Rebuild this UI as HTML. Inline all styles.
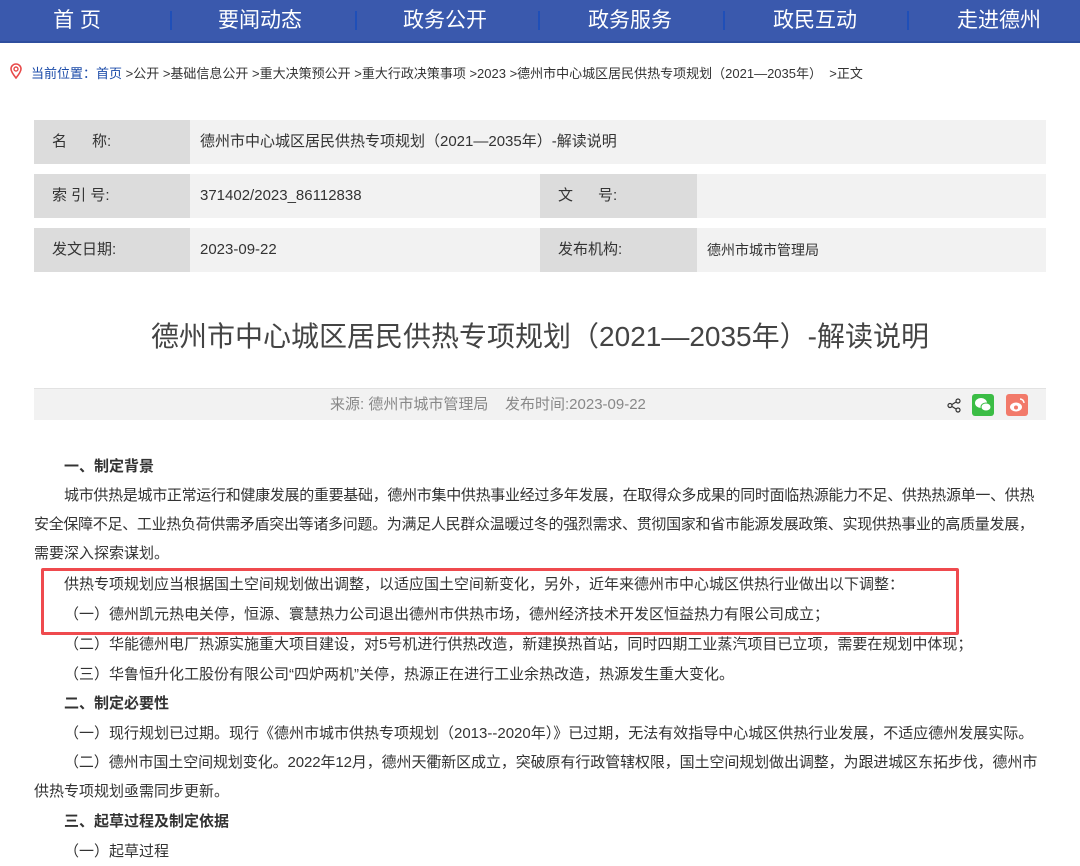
<!DOCTYPE html>
<html><head><meta charset="utf-8"><style>
*{margin:0;padding:0;box-sizing:border-box}
body{width:1080px;height:866px;overflow:hidden;background:#fff;font-family:"Liberation Sans","Noto Sans CJK SC",sans-serif;color:#333;position:relative}
.nav{position:absolute;left:0;top:0;width:1080px;height:43px;background:#3a59ad;border-bottom:2px solid #2f4e9e}
.nav span{position:absolute;top:6px;color:#fff;font-size:21px;line-height:30px;transform:translateX(-50%);white-space:nowrap}
.nav i{position:absolute;top:11px;width:2px;height:19px;background:#1f4fb8}
.bc{position:absolute;left:10px;top:63px;font-size:13px;color:#333;white-space:nowrap}
.bc b{color:#1a4aa8;font-weight:normal}
.c{position:absolute;height:44px;line-height:44px;font-size:15px;white-space:nowrap}
.l{background:#dcdcdc;padding-left:18px}
.v{background:#f2f2f2;padding-left:10px}
.t{position:absolute;left:0;width:1080px;text-align:center;top:315px;font-size:28px;color:#444}
.src{position:absolute;left:34px;top:388px;width:1012px;height:32px;background:#f2f2f2;border-top:1px solid #e2e2e2;font-size:15px;color:#888;line-height:32px}
.p{position:absolute;font-size:15px;letter-spacing:0;white-space:nowrap;color:#333}
.box{position:absolute;left:41px;top:568px;width:918px;height:67px;border:3px solid #ef4a4e;border-radius:2px}
</style></head><body>
<div class="nav">
<span style="left:77px">首 页</span><i style="left:170px"></i>
<span style="left:260px">要闻动态</span><i style="left:355px"></i>
<span style="left:445px">政务公开</span><i style="left:538px"></i>
<span style="left:630px">政务服务</span><i style="left:723px"></i>
<span style="left:815px">政民互动</span><i style="left:907px"></i>
<span style="left:999px">走进德州</span>
</div>
<svg style="position:absolute;left:9px;top:63px" width="14" height="16" viewBox="0 0 14 16"><path d="M7 15C3 10 2 8 2 6a5 5 0 0 1 10 0c0 2-1 4-5 9z" fill="none" stroke="#e84a4a" stroke-width="1.6"/><circle cx="7" cy="6" r="2" fill="none" stroke="#e84a4a" stroke-width="1.4"/></svg>
<div class="bc" style="left:31px"><b>当前位置：首页</b> &gt;公开 &gt;基础信息公开 &gt;重大决策预公开 &gt;重大行政决策事项 &gt;2023 &gt;德州市中心城区居民供热专项规划（2021—2035年） &nbsp;&gt;正文</div>

<div class="c l" style="left:34px;top:120px;width:156px">名&nbsp;&nbsp;&nbsp;&nbsp;&nbsp;&nbsp;称:</div>
<div class="c v" style="left:190px;top:120px;width:856px">德州市中心城区居民供热专项规划（2021—2035年）-解读说明</div>
<div class="c l" style="left:34px;top:174px;width:156px">索 引 号:</div>
<div class="c v" style="left:190px;top:174px;width:350px">371402/2023_86112838</div>
<div class="c l" style="left:540px;top:174px;width:157px">文&nbsp;&nbsp;&nbsp;&nbsp;&nbsp;&nbsp;号:</div>
<div class="c v" style="left:697px;top:174px;width:349px"></div>
<div class="c l" style="left:34px;top:228px;width:156px">发文日期:</div>
<div class="c v" style="left:190px;top:228px;width:350px">2023-09-22</div>
<div class="c l" style="left:540px;top:228px;width:157px">发布机构:</div>
<div class="c v" style="left:697px;top:228px;width:349px;font-size:14px">德州市城市管理局</div>

<div class="t">德州市中心城区居民供热专项规划（2021—2035年）-解读说明</div>
<div class="src"><span style="position:absolute;left:296px">来源: 德州市城市管理局&nbsp;&nbsp;&nbsp;&nbsp;发布时间:2023-09-22</span>
<svg style="position:absolute;left:913px;top:9px" width="14" height="15" viewBox="0 0 14 15"><circle cx="11" cy="3" r="2" fill="none" stroke="#333" stroke-width="1.2"/><circle cx="3" cy="7.5" r="2" fill="none" stroke="#333" stroke-width="1.2"/><circle cx="11" cy="12" r="2" fill="none" stroke="#333" stroke-width="1.2"/><path d="M5 6.5 9 4M5 8.5 9 11" stroke="#333" stroke-width="1.2"/></svg>
<div style="position:absolute;left:938px;top:5px;width:22px;height:22px;background:#3bbd45;border-radius:3px"><svg width="22" height="22" viewBox="0 0 22 22"><ellipse cx="9" cy="9" rx="6" ry="5" fill="#fff"/><ellipse cx="14" cy="13" rx="5" ry="4" fill="#fff" stroke="#3bbd45" stroke-width="1"/></svg></div>
<div style="position:absolute;left:972px;top:5px;width:22px;height:22px;background:#f27a6a;border-radius:3px"><svg width="22" height="22" viewBox="0 0 22 22"><ellipse cx="10" cy="13" rx="6" ry="4.5" fill="#fff"/><circle cx="10" cy="13.5" r="2" fill="#f27a6a"/><path d="M14 5a4 4 0 0 1 4 4" stroke="#fff" stroke-width="1.5" fill="none"/></svg></div>
</div>

<div class="p" style="left:64px;top:455px;font-weight:bold">一、制定背景</div>
<div class="p" style="left:64px;top:484px;letter-spacing:-0.3px">城市供热是城市正常运行和健康发展的重要基础，德州市集中供热事业经过多年发展，在取得众多成果的同时面临热源能力不足、供热热源单一、供热</div>
<div class="p" style="left:34px;top:513px;letter-spacing:-0.3px">安全保障不足、工业热负荷供需矛盾突出等诸多问题。为满足人民群众温暖过冬的强烈需求、贯彻国家和省市能源发展政策、实现供热事业的高质量发展，</div>
<div class="p" style="left:34px;top:542px">需要深入探索谋划。</div>
<div class="p" style="left:64px;top:573px">供热专项规划应当根据国土空间规划做出调整，以适应国土空间新变化，另外，近年来德州市中心城区供热行业做出以下调整：</div>
<div class="p" style="left:64px;top:603px">（一）德州凯元热电关停，恒源、寰慧热力公司退出德州市供热市场，德州经济技术开发区恒益热力有限公司成立；</div>
<div class="box"></div>
<div class="p" style="left:64px;top:633px">（二）华能德州电厂热源实施重大项目建设，对5号机进行供热改造，新建换热首站，同时四期工业蒸汽项目已立项，需要在规划中体现；</div>
<div class="p" style="left:64px;top:663px">（三）华鲁恒升化工股份有限公司“四炉两机”关停，热源正在进行工业余热改造，热源发生重大变化。</div>
<div class="p" style="left:64px;top:692px;font-weight:bold">二、制定必要性</div>
<div class="p" style="left:64px;top:722px">（一）现行规划已过期。现行《德州市城市供热专项规划（2013--2020年）》已过期，无法有效指导中心城区供热行业发展，不适应德州发展实际。</div>
<div class="p" style="left:64px;top:751px;letter-spacing:-0.1px">（二）德州市国土空间规划变化。2022年12月，德州天衢新区成立，突破原有行政管辖权限，国土空间规划做出调整，为跟进城区东拓步伐，德州市</div>
<div class="p" style="left:34px;top:780px">供热专项规划亟需同步更新。</div>
<div class="p" style="left:64px;top:810px;font-weight:bold">三、起草过程及制定依据</div>
<div class="p" style="left:64px;top:840px">（一）起草过程</div>
</body></html>
